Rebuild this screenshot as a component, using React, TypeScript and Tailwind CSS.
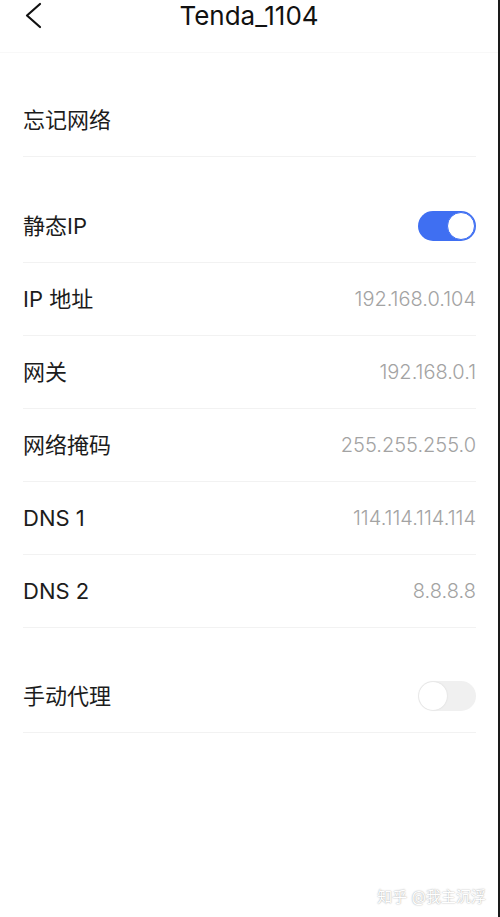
import React from "react";

const font = { fontFamily: 'Inter, "Noto Sans CJK SC", sans-serif' };

function Row({ label, value, children }: { label: string; value?: string; children?: React.ReactNode }) {
  return (
    <div className="ml-[23px] mr-[22px] flex h-[73px] items-center justify-between border-b border-[#f2f2f2]">
      <span className="text-[22px] leading-none text-[#1c1c1c]">{label}</span>
      {value && <span className="text-[20px] font-light leading-none text-[#a3a3a3]">{value}</span>}
      {children}
    </div>
  );
}

function Toggle({ on }: { on: boolean }) {
  return on ? (
    <div className="flex h-[30px] w-[58px] items-center justify-end rounded-full bg-[#3f6ff2] pr-px">
      <div className="h-[28px] w-[28px] rounded-full border border-[#3f6ff2] bg-white" />
    </div>
  ) : (
    <div className="flex h-[30px] w-[58px] items-center justify-start rounded-full bg-[#f0f0f0] pl-px">
      <div className="h-[28px] w-[28px] rounded-full bg-white shadow-[0_0_2px_rgba(0,0,0,0.12)]" />
    </div>
  );
}

export default function App() {
  return (
    <div className="relative h-[917px] w-[500px] overflow-hidden border-r-2 border-[#1a1a1a] bg-white" style={font}>
      <div className="relative flex h-[53px] items-start justify-center border-b border-[#f8f8f8]">
        <svg className="absolute left-[24px] top-[2px]" width="20" height="28" viewBox="0 0 20 28">
          <polyline points="16,2 3,13.5 16,25" fill="none" stroke="#111" strokeWidth="2.2" strokeLinecap="round" strokeLinejoin="round" />
        </svg>
        <span className="mt-[1px] text-[26px] leading-[30px] text-[#111]">Tenda_1104</span>
      </div>

      <div className="mt-[31px]">
        <Row label="忘记网络" />
      </div>

      <div className="mt-[33px]">
        <Row label="静态IP">
          <Toggle on />
        </Row>
        <Row label="IP 地址" value="192.168.0.104" />
        <Row label="网关" value="192.168.0.1" />
        <Row label="网络掩码" value="255.255.255.0" />
        <Row label="DNS 1" value="114.114.114.114" />
        <Row label="DNS 2" value="8.8.8.8" />
      </div>

      <div className="mt-[32px]">
        <Row label="手动代理">
          <Toggle on={false} />
        </Row>
      </div>

      <div className="absolute bottom-[13px] right-[12px] text-[15px] leading-none text-white [text-shadow:0_0_1.5px_rgba(0,0,0,0.45)]">
        知乎 @我主沉浮
      </div>
    </div>
  );
}
